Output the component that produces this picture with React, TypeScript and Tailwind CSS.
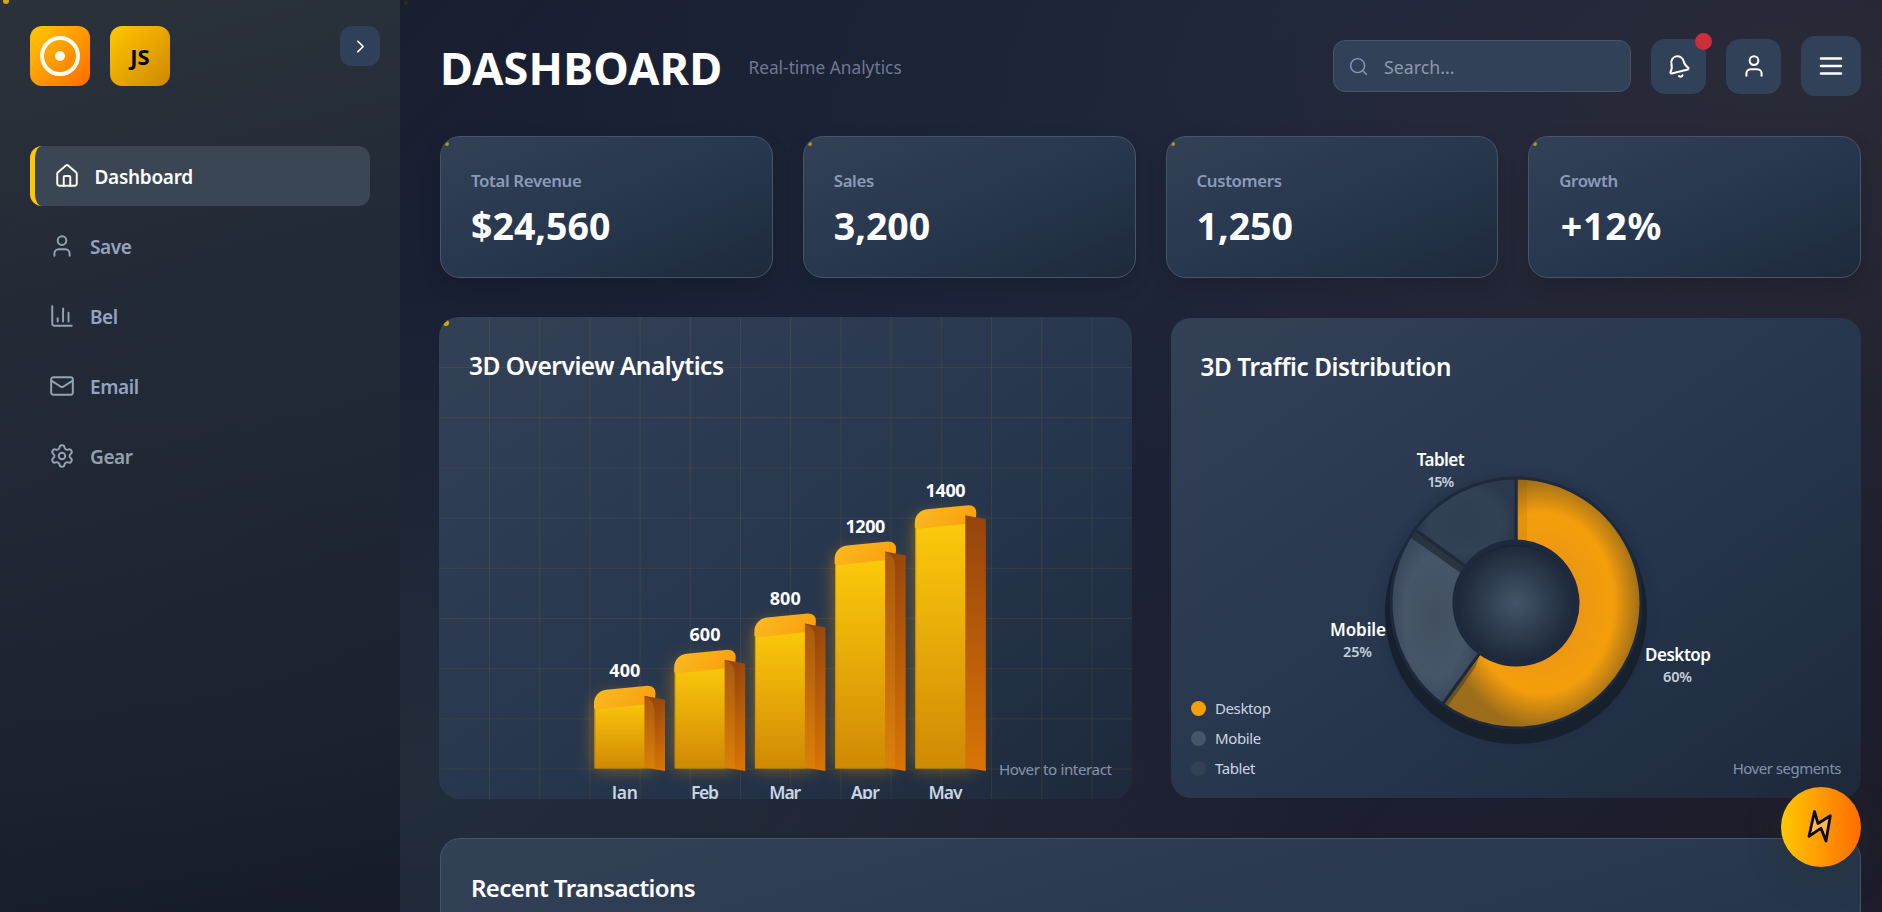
import React from "react";
import { Bell, ChartColumn, ChevronRight, House, Mail, Search, Settings, User } from "lucide-react";

const navItems = [
  { label: "Save", Icon: User, color: "text-[#94a3c0]" },
  { label: "Bel", Icon: ChartColumn, color: "text-[#94a3c0]" },
  { label: "Email", Icon: Mail, color: "text-[#94a3c0]" },
  { label: "Gear", Icon: Settings, color: "text-[#94a0ad]" },
];

const stats = [
  { label: "Total Revenue", value: "$24,560", spacing: "tracking-[0px]" },
  { label: "Sales", value: "3,200", spacing: "tracking-[0px]" },
  { label: "Customers", value: "1,250", spacing: "tracking-[0px]" },
  { label: "Growth", value: "+12%", spacing: "pl-[1.500px] tracking-[0.8px]" },
];

const bars = [
  { month: "Jan", value: 400, w: 26, vw: 31 },
  { month: "Feb", value: 600, w: 28, vw: 31 },
  { month: "Mar", value: 800, w: 32, vw: 31 },
  { month: "Apr", value: 1200, w: 29, vw: 40 },
  { month: "May", value: 1400, w: 34, vw: 40 },
];

const legend = [
  { label: "Desktop", dot: "bg-[#f59e0b]" },
  { label: "Mobile", dot: "bg-[#475569]" },
  { label: "Tablet", dot: "bg-[#334155]" },
];

const chartGradient = "bg-[linear-gradient(145deg,#334157_0%,#25354c_60%,#1e293b_100%)]";
const panelGradient = "bg-[linear-gradient(to_bottom_right,#334157_0%,#25354c_60%,#1e293b_100%)]";

function Sidebar() {
  return (
    <aside className="relative flex h-full w-[400px] shrink-0 flex-col bg-[linear-gradient(165deg,rgba(66,80,78,0.4)_0%,rgba(40,48,58,0.5)_42%,rgba(22,26,40,0.85)_95%)] px-[30px] pt-[26px]">
      <span className="absolute left-[3px] top-[-4px] h-2 w-[6px] rounded-full bg-[#d0a810]" />
      <div className="-mr-[10px] flex items-start gap-5">
        <div className="flex size-[60px] items-center justify-center rounded-xl bg-[linear-gradient(135deg,#ffc800,#ff6b00)]">
          <svg width="40" height="40" viewBox="0 0 40 40">
            <circle cx="20" cy="20" r="18" fill="none" stroke="#fffaf0" strokeWidth="4" />
            <circle cx="20" cy="20" r="5" fill="#fffaf0" />
          </svg>
        </div>
        <div className="flex size-[60px] items-center justify-center rounded-xl bg-[linear-gradient(135deg,#ffc800,#d08700)] text-[22px] font-bold text-black">
          <span>JS</span>
        </div>
        <button className="ml-auto flex size-10 items-center justify-center rounded-xl bg-[#304059] text-white">
          <ChevronRight size={21} strokeWidth={2} />
        </button>
      </div>
      <nav className="mt-[60px] flex flex-col gap-[10px]">
        <a className="flex h-[60px] items-center gap-[14.500px] rounded-xl border-l-[5px] border-[#ffc800] bg-[#3a4654] pl-[19px] text-white">
          <House size={26} strokeWidth={1.8} color="#fffbea" />
          <span className="mt-[2px] text-[19px] font-semibold tracking-[-0.3px]">Dashboard</span>
        </a>
        {navItems.map(({ label, Icon, color }) => (
          <a key={label} className={"flex h-[60px] items-center gap-[15px] pl-[19px] " + color}>
            <Icon size={26} strokeWidth={1.8} color="#94a3b1" />
            <span className="mt-[2px] text-[19px] font-semibold tracking-[-0.4px]">{label}</span>
          </a>
        ))}
      </nav>
    </aside>
  );
}

function Header() {
  return (
    <header className="flex h-[60px] items-center">
      <h1 className="mt-1 text-[45px] leading-[56px] font-bold tracking-[0.2px] text-white">DASHBOARD</h1>
      <p className="ml-[26px] mt-[3px] text-[17.300px] text-[#6b7a92]">Real-time Analytics</p>
      <div className="ml-auto flex items-center gap-5">
        <div className="flex h-[52px] w-[298px] items-center gap-[15px] rounded-xl border border-[#475569] bg-[#314158] pl-[14px]">
          <Search size={21} strokeWidth={1.7} color="#8294b8" />
          <span className="mt-[3px] text-[17.800px] text-[#8d99a8]">Search...</span>
        </div>
        <button className="relative flex size-[55px] items-center justify-center rounded-[14px] bg-[#314158] text-white">
          <Bell size={25} strokeWidth={1.9} className="-rotate-[14deg]" />
          <span className="absolute -right-[6px] -top-[6px] size-[17px] rounded-full bg-[#cc2e3a]" />
        </button>
        <button className="flex size-[55px] items-center justify-center rounded-[14px] bg-[#314158] text-white">
          <User size={26} strokeWidth={1.9} />
        </button>
        <button className="flex size-[60px] items-center justify-center rounded-[14px] bg-[#314158] text-white">
          <svg width="30" height="30" viewBox="0 0 30 30" stroke="white" strokeWidth="2.6" strokeLinecap="round">
            <path d="M5 7.5h20M5 15h20M5 22.5h20" />
          </svg>
        </button>
      </div>
    </header>
  );
}

function Stats() {
  return (
    <section className="mt-10 grid grid-cols-4 gap-[30px]">
      {stats.map((s) => (
        <div
          key={s.label}
          className={
            "relative h-[142px] overflow-hidden rounded-[20px] border border-[#475569] px-[30px] pt-[30px] shadow-[0_8px_20px_rgba(0,0,0,0.12)] " +
            panelGradient
          }
        >
          <span className="absolute left-1 top-[5px] size-1 rounded-full bg-[#b09420]" />
          <div className="text-[16.800px] leading-7 font-semibold tracking-[-0.35px] text-[#8a9bb9]">{s.label}</div>
          <div className={"mt-[8px] text-[37.500px] leading-[46px] font-bold text-white " + s.spacing}>{s.value}</div>
        </div>
      ))}
    </section>
  );
}

function Bar({ index, value, month, w, vw }: { index: number; value: number; month: string; w: number; vw: number }) {
  const x = 155.5 + index * 80.2;
  const base = 451.5;
  const top = base - value * 0.1805;
  return (
    <g>
      <path
        d={`M${x} ${base}V${top + 12}Q${x} ${top} ${x + 12} ${top}H${x + 48}Q${x + 60} ${top} ${x + 60} ${top + 12}V${base}Z`}
        fill="#f59e0b"
        opacity="0.5"
        filter="url(#glow)"
      />
      <path
        d={`M${x} ${base}V${top + 10}Q${x} ${top} ${x + 10} ${top}H${x + 50}Q${x + 60} ${top} ${x + 60} ${top + 10}V${base}Z`}
        fill="url(#front)"
      />
      <path d={`M${x + 0.5} ${top + 11}V${base - 0.5}H${x + 50}`} fill="none" stroke="#b98a0c" strokeWidth="1" opacity="0.7" />
      <path
        d={`M${x - 0.5} ${top + 12}V${top + 7}A13.500 13.500 0 0 1 ${x + 12} ${top - 6.5}L${x + 53} ${top - 10.5}Q${x + 61} ${top - 10.5} ${x + 61} ${top - 3}Q${x + 61} ${top + 7} ${x + 56} ${top + 7.5}L${x + 4} ${top + 13}Z`}
        fill="url(#cap)"
      />
      <path
        d={`M${x + 50} ${top - 0.5}L${x + 70.5} ${top + 3.5}V${base + 2.5}L${x + 50} ${base - 1}Z`}
        fill="url(#side)"
      />
      {value < 1400 && (
        <path
          d={`M${x + 50} ${top}Q${x + 60} ${top + 3} ${x + 60} ${top + 14}V${base}L${x + 50} ${base - 1.5}Z`}
          fill="#e8a016"
          opacity="0.25"
        />
      )}
      <text x={x + 30.3} y={top - 19.3} textAnchor="middle" textLength={vw} fontSize="18" fontWeight="700" fill="#fff">
        {value}
      </text>
      <text x={x + 30.3} y={482} textAnchor="middle" textLength={w} fontSize="17.500" fontWeight="600" fill="#cbd5e1">
        {month}
      </text>
    </g>
  );
}

function OverviewCard() {
  const grid = Array.from({ length: 13 }, (_, i) => 50.2 * (i + 1));
  return (
    <div className={"relative -mx-px -my-px h-[482px] overflow-hidden rounded-[20px] " + chartGradient}>
      <svg className="block" width="693" height="482" viewBox="0 0 693 482">
        <defs>
          <linearGradient id="front" x1="0" y1="0" x2="0" y2="1">
            <stop offset="0" stopColor="#fdcb0b" />
            <stop offset="1" stopColor="#d08904" />
          </linearGradient>
          <linearGradient id="side" x1="0" y1="0" x2="0" y2="1">
            <stop offset="0" stopColor="#96430d" />
            <stop offset="1" stopColor="#d97506" />
          </linearGradient>
          <linearGradient id="cap" x1="0" y1="0" x2="1" y2="0.3">
            <stop offset="0" stopColor="#fbbb22" />
            <stop offset="1" stopColor="#f9a20e" />
          </linearGradient>
          <filter id="glow" x="-100%" y="-60%" width="300%" height="220%">
            <feGaussianBlur stdDeviation="9" />
          </filter>
        </defs>
        <g stroke="#f59e0b" strokeOpacity="0.1">
          {grid.map((g) => (
            <path key={"v" + g} d={`M${g + 0.3} 0V482`} />
          ))}
          {grid.slice(0, 9).map((g) => (
            <path key={"h" + g} d={`M0 ${g + 0.3}H693`} />
          ))}
        </g>
        <circle cx="7" cy="6" r="3" fill="#d0a810" />
        <text x="30" y="58" textLength="255" fontSize="24.500" fontWeight="600" fill="#fff">
          3D Overview Analytics
        </text>
        {bars.map((b, i) => (
          <Bar key={b.month} index={i} {...b} />
        ))}
        <text x="560" y="457.500" textLength="113" fontSize="15.200" fill="#8393ae">
          Hover to interact
        </text>
      </svg>
    </div>
  );
}

function polar(r: number, deg: number) {
  const a = ((deg - 90) * Math.PI) / 180;
  return `${(150 + r * Math.cos(a)).toFixed(2)} ${(150 + r * Math.sin(a)).toFixed(2)}`;
}

function segment(from: number, to: number) {
  const large = to - from > 180 ? 1 : 0;
  return `M${polar(125, from)}A125 125 0 ${large} 1 ${polar(125, to)}L${polar(62, to)}A62 62 0 ${large} 0 ${polar(62, from)}Z`;
}

function Donut() {
  return (
    <svg className="absolute left-[195.500px] top-[135px] overflow-visible" width="300" height="300" viewBox="0 0 300 300">
      <defs>
        <radialGradient id="desk">
          <stop offset="0" stopColor="#e08f1a" />
          <stop offset="0.72" stopColor="#f59e0b" />
          <stop offset="1" stopColor="#9c6d1a" />
        </radialGradient>
        <radialGradient id="mob">
          <stop offset="0" stopColor="#414f60" />
          <stop offset="0.7" stopColor="#475569" />
          <stop offset="1" stopColor="#3a495d" />
        </radialGradient>
        <radialGradient id="tab">
          <stop offset="0" stopColor="#2f3d50" />
          <stop offset="0.7" stopColor="#334155" />
          <stop offset="1" stopColor="#2b384d" />
        </radialGradient>
        <radialGradient id="hub">
          <stop offset="0" stopColor="#445468" />
          <stop offset="1" stopColor="#1e293b" />
        </radialGradient>
        <filter id="soft" x="-20%" y="-20%" width="140%" height="140%">
          <feGaussianBlur stdDeviation="8" />
        </filter>
        <clipPath id="ring">
          <circle cx="150" cy="150" r="125" />
        </clipPath>
      </defs>
      <circle cx="150" cy="156" r="128" fill="#0f172a" opacity="0.3" filter="url(#soft)" />
      <circle cx="150" cy="160" r="131" fill="#17202d" />
      <g stroke="#1e293b" strokeWidth="3" strokeLinejoin="round">
        <path d={segment(0, 216)} fill="url(#desk)" />
        <path d={segment(216, 306)} fill="url(#mob)" />
        <path d={segment(306, 360)} fill="url(#tab)" />
      </g>
      <g clipPath="url(#ring)">
        <path d="M151.500 25H161V87H151.500Z" fill="#7c4a10" opacity="0.12" />
        <path d="M114 201L109.500 214L79 257L76 251Z" fill="#1f2937" opacity="0.4" />
        <path d="M48 78L99 114L96 121L44 84Z" fill="#222b38" opacity="0.75" />
      </g>
      <circle cx="150" cy="150" r="61" fill="#1e293b" stroke="#1d2a3f" strokeWidth="3" />
      <circle cx="150" cy="150" r="58" fill="url(#hub)" />
      <path d="M110 108A58 58 0 0 1 190 108A61 61 0 0 0 110 108Z" fill="#172131" />
      <g textAnchor="middle" fontSize="17" fontWeight="600" fill="#fff">
        <text x="74.700" y="13" textLength="48">Tablet</text>
        <text x="-8" y="183" textLength="56">Mobile</text>
        <text x="312" y="208" textLength="66">Desktop</text>
      </g>
      <g textAnchor="middle" fontSize="14.500" fontWeight="600" fill="#c3cedb">
        <text x="74.700" y="34" textLength="27">15%</text>
        <text x="-8.500" y="204" textLength="29">25%</text>
        <text x="311.500" y="229" textLength="29">60%</text>
      </g>
    </svg>
  );
}

function TrafficCard() {
  return (
    <div className={"relative flex h-[480px] flex-col rounded-[20px] p-[30px] " + chartGradient}>
      <h2 className="mt-[1px] text-[24.300px] leading-[36px] font-semibold tracking-[-0.42px] text-white">3D Traffic Distribution</h2>
      <Donut />
      <div className="-mx-[10px] -mb-[10px] mt-auto flex items-end justify-between">
        <ul className="flex flex-col gap-[10px]">
          {legend.map((l) => (
            <li key={l.label} className="flex h-5 items-center gap-[9.500px]">
              <span className={"size-[15px] rounded-full " + l.dot} />
              <span className="text-[15px] leading-5 tracking-[-0.4px] text-[#cbd5e1]">{l.label}</span>
            </li>
          ))}
        </ul>
        <span className="text-[15px] leading-5 tracking-[-0.5px] text-[#8393ae]">Hover segments</span>
      </div>
    </div>
  );
}

export default function App() {
  return (
    <div className="relative flex h-[912px] w-full overflow-hidden bg-[radial-gradient(ellipse_at_20%_85%,rgba(190,210,90,0.07)_0%,transparent_45%),radial-gradient(ellipse_at_95%_8%,rgba(240,190,140,0.065)_0%,transparent_50%),linear-gradient(135deg,#1b1e2c_0%,#172138_45%,#1b2033_62%,#1e1c2a_100%)] font-['Noto_Sans',sans-serif]">
      <Sidebar />
      <main className="relative flex-1 pl-10 pr-[21px] pt-9">
        <span className="absolute left-1 top-[1px] size-1 rounded-full bg-[#2f301f]" />
        <Header />
        <Stats />
        <section className="mt-10 grid grid-cols-2 gap-10">
          <OverviewCard />
          <TrafficCard />
        </section>
        <section className={"mt-10 h-[400px] rounded-[20px] border border-[#475569] px-[30px] pt-[30px] " + panelGradient}>
          <h2 className="text-[24px] leading-[38px] font-semibold tracking-[-0.58px] text-white">Recent Transactions</h2>
        </section>
      </main>
      <button className="absolute right-[21px] bottom-[45px] size-20 rounded-full bg-[linear-gradient(90deg,#ffc800,#ff6b00)] shadow-[0_10px_30px_rgba(40,50,40,0.5)]">
        <svg className="block" width="80" height="80" viewBox="-40 -40 80 80">
          <path
            d="M-6.500 -15.500L-3 -3.500L9.300 -11.200L5 14L0 1.200L-12 9.300Z"
            fill="#fff"
            fillOpacity="0.3"
            stroke="#0a0a05"
            strokeWidth="2.800"
            strokeLinejoin="round"
          />
        </svg>
      </button>
    </div>
  );
}
